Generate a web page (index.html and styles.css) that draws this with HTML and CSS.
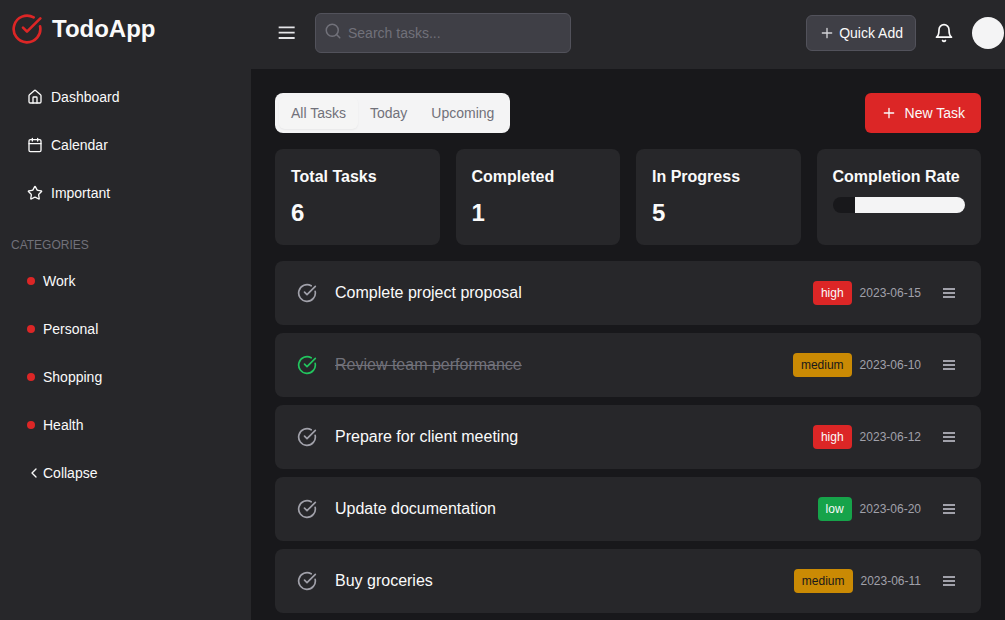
FILE: index.html
```html
<!DOCTYPE html>
<html lang="en">
<head>
    <meta charset="UTF-8">
    <meta name="viewport" content="width=device-width, initial-scale=1.0">
    <title>TodoApp</title>
    <link rel="stylesheet" href="styles.css">
</head>
<body>
    <svg class="sprites" aria-hidden="true">
        <symbol id="i-check" viewBox="0 0 24 24"><path d="M21.801 10A10 10 0 1 1 17 3.335"/><path d="m9 11 3 3L22 4"/></symbol>
        <symbol id="i-menu" viewBox="0 0 16 16"><path d="M2 4h12M2 8h12M2 12h12"/></symbol>
        <symbol id="i-plus" viewBox="0 0 24 24"><path d="M5 12h14M12 5v14"/></symbol>
    </svg>

    <header class="topbar">
        <div class="brand">
            <svg class="icon logo"><use href="#i-check"/></svg>
            <span>TodoApp</span>
        </div>
        <div class="topbar-main">
            <button class="menu-toggle"><svg class="icon"><use href="#i-menu"/></svg></button>
            <label class="search">
                <svg class="icon" viewBox="0 0 24 24"><circle cx="11" cy="11" r="8"/><path d="m21 21-4.3-4.3"/></svg>
                <input type="text" placeholder="Search tasks...">
            </label>
            <div class="topbar-actions">
                <button class="quick-add"><svg class="icon"><use href="#i-plus"/></svg>Quick Add</button>
                <button class="bell">
                    <svg class="icon" viewBox="0 0 24 24"><path d="M6 8a6 6 0 0 1 12 0c0 7 3 9 3 9H3s3-2 3-9"/><path d="M10.3 21a1.94 1.94 0 0 0 3.4 0"/></svg>
                </button>
                <div class="avatar"></div>
            </div>
        </div>
    </header>

    <div class="layout">
        <aside class="sidebar">
            <a class="nav-item">
                <svg class="icon" viewBox="0 0 24 24"><path d="M15 21v-8a1 1 0 0 0-1-1h-4a1 1 0 0 0-1 1v8"/><path d="M3 10a2 2 0 0 1 .709-1.528l7-5.999a2 2 0 0 1 2.582 0l7 5.999A2 2 0 0 1 21 10v9a2 2 0 0 1-2 2H5a2 2 0 0 1-2-2z"/></svg>
                Dashboard
            </a>
            <a class="nav-item">
                <svg class="icon" viewBox="0 0 24 24"><path d="M8 2v4M16 2v4"/><rect x="3" y="4" width="18" height="18" rx="2"/><path d="M3 10h18"/></svg>
                Calendar
            </a>
            <a class="nav-item">
                <svg class="icon" viewBox="0 0 24 24"><path d="M11.525 2.295a.53.53 0 0 1 .95 0l2.31 4.679a2.123 2.123 0 0 0 1.595 1.16l5.166.756a.53.53 0 0 1 .294.904l-3.736 3.638a2.123 2.123 0 0 0-.611 1.878l.882 5.14a.53.53 0 0 1-.771.56l-4.618-2.428a2.122 2.122 0 0 0-1.973 0L6.396 21.01a.53.53 0 0 1-.77-.56l.881-5.139a2.122 2.122 0 0 0-.611-1.879L2.16 9.795a.53.53 0 0 1 .294-.906l5.165-.755a2.122 2.122 0 0 0 1.597-1.16z"/></svg>
                Important
            </a>

            <div class="nav-label">CATEGORIES</div>

            <a class="nav-item category"><span class="dot"></span>Work</a>
            <a class="nav-item category"><span class="dot"></span>Personal</a>
            <a class="nav-item category"><span class="dot"></span>Shopping</a>
            <a class="nav-item category"><span class="dot"></span>Health</a>

            <a class="nav-item collapse">
                <svg class="icon" viewBox="0 0 24 24"><path d="m15 18-6-6 6-6"/></svg>
                Collapse
            </a>
        </aside>

        <main class="content">
            <div class="toolbar">
                <div class="tabs">
                    <button class="tab active">All Tasks</button>
                    <button class="tab">Today</button>
                    <button class="tab">Upcoming</button>
                </div>
                <button class="new-task"><svg class="icon"><use href="#i-plus"/></svg>New Task</button>
            </div>

            <section class="stats">
                <div class="stat"><h3>Total Tasks</h3><p>6</p></div>
                <div class="stat"><h3>Completed</h3><p>1</p></div>
                <div class="stat"><h3>In Progress</h3><p>5</p></div>
                <div class="stat">
                    <h3>Completion Rate</h3>
                    <div class="progress"><div class="progress-bar"></div></div>
                </div>
            </section>

            <section class="tasks">
                <div class="task">
                    <button class="task-check"><svg class="icon"><use href="#i-check"/></svg></button>
                    <span class="task-title">Complete project proposal</span>
                    <span class="badge high">high</span>
                    <span class="task-date">2023-06-15</span>
                    <button class="task-menu"><svg class="icon"><use href="#i-menu"/></svg></button>
                </div>
                <div class="task done">
                    <button class="task-check"><svg class="icon"><use href="#i-check"/></svg></button>
                    <span class="task-title">Review team performance</span>
                    <span class="badge medium">medium</span>
                    <span class="task-date">2023-06-10</span>
                    <button class="task-menu"><svg class="icon"><use href="#i-menu"/></svg></button>
                </div>
                <div class="task">
                    <button class="task-check"><svg class="icon"><use href="#i-check"/></svg></button>
                    <span class="task-title">Prepare for client meeting</span>
                    <span class="badge high">high</span>
                    <span class="task-date">2023-06-12</span>
                    <button class="task-menu"><svg class="icon"><use href="#i-menu"/></svg></button>
                </div>
                <div class="task">
                    <button class="task-check"><svg class="icon"><use href="#i-check"/></svg></button>
                    <span class="task-title">Update documentation</span>
                    <span class="badge low">low</span>
                    <span class="task-date">2023-06-20</span>
                    <button class="task-menu"><svg class="icon"><use href="#i-menu"/></svg></button>
                </div>
                <div class="task">
                    <button class="task-check"><svg class="icon"><use href="#i-check"/></svg></button>
                    <span class="task-title">Buy groceries</span>
                    <span class="badge medium">medium</span>
                    <span class="task-date">2023-06-11</span>
                    <button class="task-menu"><svg class="icon"><use href="#i-menu"/></svg></button>
                </div>
            </section>
        </main>
    </div>
</body>
</html>
```

FILE: styles.css
```css
* {
    box-sizing: border-box;
}
html, body {
    height: 100%;
}
body {
    margin: 0;
    overflow: hidden;
    background-color: #18181b;
    color: #fafafa;
    font-family: "Liberation Sans", Arial, sans-serif;
    font-size: 14px;
}
button {
    font: inherit;
    color: inherit;
    background: none;
    border: none;
    padding: 0;
    cursor: pointer;
}
.sprites {
    display: none;
}
.icon {
    display: block;
    flex: none;
    width: 16px;
    height: 16px;
    fill: none;
    stroke: currentColor;
    stroke-width: 2;
    stroke-linecap: round;
    stroke-linejoin: round;
}

/* top bar */
.topbar {
    display: flex;
    height: 69px;
    background-color: #27272a;
}
.brand {
    display: flex;
    align-items: center;
    gap: 9px;
    width: 251px;
    height: 58px;
    padding-left: 11px;
    font-size: 24px;
    font-weight: 700;
}
.logo {
    width: 32px;
    height: 32px;
    color: #dc2626;
}
.topbar-main {
    flex: 1;
    display: flex;
    align-items: center;
    padding: 0 1px 3px 18px;
}
.menu-toggle {
    display: flex;
    align-items: center;
    justify-content: center;
    width: 36px;
    height: 36px;
    margin-right: 10px;
    color: #e4e4e7;
}
.menu-toggle .icon {
    width: 21.33px;
    height: 21.33px;
    stroke-width: 1.4;
    stroke-linecap: butt;
}
.search {
    display: flex;
    align-items: center;
    width: 256px;
    height: 40px;
    padding: 0 8px;
    background-color: #3f3f46;
    border: 1px solid #52525b;
    border-radius: 6px;
    color: #71717a;
}
.search .icon {
    width: 18px;
    height: 18px;
    margin-bottom: 4px;
}
.search input {
    flex: 1;
    min-width: 0;
    margin-left: 6px;
    padding: 0;
    background: none;
    border: none;
    outline: none;
    color: #fafafa;
    font: inherit;
}
.search input::placeholder {
    color: #71717a;
}
.topbar-actions {
    display: flex;
    align-items: center;
    margin-left: auto;
}
.quick-add {
    display: flex;
    align-items: center;
    gap: 4px;
    height: 36px;
    padding: 0 12px;
    background-color: #3f3f46;
    border: 1px solid #52525b;
    border-radius: 6px;
}
.quick-add .icon {
    color: #d4d4d8;
}
.bell {
    display: flex;
    justify-content: center;
    width: 56px;
}
.bell .icon {
    width: 20px;
    height: 20px;
}
.avatar {
    width: 32px;
    height: 32px;
    border-radius: 50%;
    background-color: #f4f4f5;
}

/* sidebar */
.layout {
    display: flex;
    height: calc(100vh - 69px);
}
.sidebar {
    flex: none;
    width: 251px;
    padding: 8px 0;
    background-color: #27272a;
}
.nav-item {
    display: flex;
    align-items: center;
    gap: 8px;
    height: 40px;
    margin: 0 16px 8px;
    padding-left: 11px;
}
.nav-label {
    margin: 24px 0 8px;
    padding-left: 11px;
    color: #71717a;
    font-size: 12px;
    line-height: 16px;
}
.category .dot {
    width: 8px;
    height: 8px;
    border-radius: 50%;
    background-color: #dc2626;
}
.collapse {
    gap: 1px;
    padding-left: 10px;
}

/* main area */
.content {
    flex: 1;
    min-width: 0;
    padding: 24px;
}
.toolbar {
    display: flex;
    justify-content: space-between;
    margin-bottom: 16px;
}
.tabs {
    display: flex;
    height: 40px;
    padding: 4px;
    background-color: #f4f4f5;
    border-radius: 8px;
}
.tab {
    padding: 0 12px;
    color: #71717a;
    border-radius: 6px;
}
.tab.active {
    background-color: #f5f5f5;
    box-shadow: 0 1px 2px rgba(0, 0, 0, 0.05);
}
.new-task {
    display: flex;
    align-items: center;
    gap: 8px;
    height: 40px;
    padding: 0 16px;
    background-color: #dc2626;
    border-radius: 6px;
}
.stats {
    display: grid;
    grid-template-columns: repeat(4, 1fr);
    gap: 16px;
    margin-bottom: 16px;
}
.stat {
    height: 96px;
    padding: 16px;
    background-color: #27272a;
    border-radius: 8px;
}
.stat h3 {
    margin: 0 0 8px;
    font-size: 16px;
    line-height: 24px;
}
.stat p {
    margin: 0;
    font-size: 24px;
    font-weight: 700;
    line-height: 32px;
}
.progress {
    height: 16px;
    background-color: #18181b;
    border-radius: 8px;
    overflow: hidden;
}
.progress-bar {
    width: 83.33%;
    height: 100%;
    margin-left: 16.67%;
    background-color: #f4f4f5;
}

/* task list */
.tasks {
    display: flex;
    flex-direction: column;
    gap: 8px;
}
.task {
    flex: none;
    display: flex;
    align-items: center;
    height: 64px;
    padding: 0 16px;
    background-color: #27272a;
    border-radius: 8px;
}
.task-check {
    display: flex;
    align-items: center;
    justify-content: center;
    width: 32px;
    height: 32px;
    margin-right: 12px;
    color: #a1a1aa;
}
.task-check .icon {
    width: 20px;
    height: 20px;
}
.task-title {
    flex: 1;
    font-size: 16px;
}
.task.done .task-check {
    color: #22c55e;
}
.task.done .task-title {
    color: #71717a;
    text-decoration: line-through;
}
.badge {
    padding: 0 8px;
    border-radius: 4px;
    font-size: 12px;
    line-height: 24px;
}
.badge.high {
    background-color: #dc2626;
}
.badge.medium {
    background-color: #ca8a04;
    color: #18181b;
}
.badge.low {
    background-color: #16a34a;
}
.task-date {
    margin-left: 8px;
    color: #a1a1aa;
    font-size: 12px;
}
.task-menu {
    display: flex;
    align-items: center;
    justify-content: center;
    width: 32px;
    height: 32px;
    margin-left: 12px;
    color: #a1a1aa;
}
.task-menu .icon {
    stroke-linecap: butt;
}
```
